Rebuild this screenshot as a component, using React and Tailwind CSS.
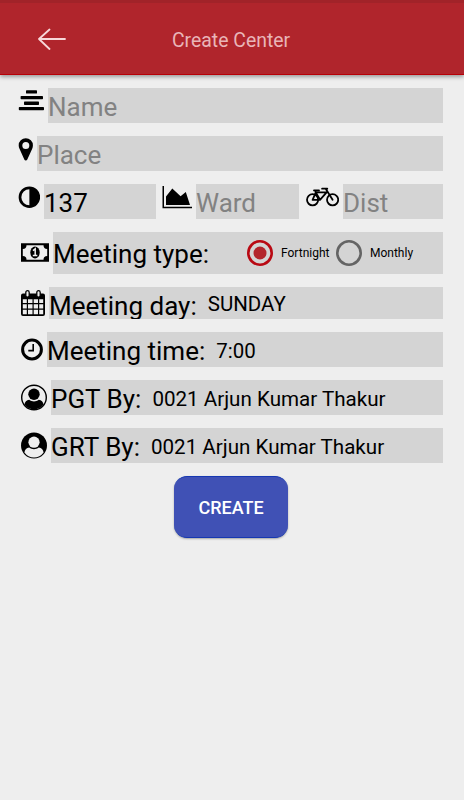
function Icon({ className, viewBox, children }) {
  return (
    <svg className={`block shrink-0 ${className}`} viewBox={viewBox} fill="currentColor">
      {children}
    </svg>
  );
}

const AlignIcon = () => (
  <Icon className="mt-[2px] h-[21px] w-[26px]" viewBox="0 0 26 21">
    <rect x="8" y="0.2" width="11" height="3.4" rx="0.7" />
    <rect x="2.6" y="6" width="22.4" height="3.2" rx="0.7" />
    <rect x="6" y="11.600" width="15" height="3.400" rx="0.7" />
    <rect x="0.8" y="17" width="25.200" height="3.200" rx="0.7" />
  </Icon>
);

const PinIcon = () => (
  <Icon className="mt-[2px] h-[23px] w-[15px]" viewBox="0 0 15 23">
    <path
      fillRule="evenodd"
      d="M7.8 0.2A7.1 7.1 0 0 0 .7 7.4c0 1.300.3 2.300.8 3.300l4.800 10.700c.6 1.400 2.400 1.400 3 0l4.900-10.700c.4-1 .7-2 .7-3.300A7.100 7.100 0 0 0 7.800.2Zm0 3.700a3.500 3.500 0 1 1 0 7 3.500 3.500 0 0 1 0-7Z"
    />
  </Icon>
);

const AdjustIcon = () => (
  <Icon className="mt-[2px] h-[22px] w-[22px]" viewBox="0 0 22 22">
    <circle cx="11.400" cy="11.200" r="9.400" fill="none" stroke="currentColor" strokeWidth="2.700" />
    <path d="M11.400 2.200a9 9 0 0 1 0 18Z" />
  </Icon>
);

const AreaIcon = () => (
  <Icon className="mt-[2px] h-[23px] w-[30px]" viewBox="0 0 30 23">
    <path d="M0.5 0h1.500v20.700H30v1.500H.5Z" />
    <path d="M4 19V10.500L10.300 2.400 18.600 10.200l5.200-4.300L28 19Z" />
  </Icon>
);

const BikeIcon = () => (
  <Icon className="mt-[3px] h-[20px] w-[33px]" viewBox="0 0 33 20">
    <g fill="none" stroke="currentColor" strokeWidth="1.800" strokeLinejoin="round" strokeLinecap="round">
      <circle cx="6.6" cy="12.8" r="5.6" />
      <circle cx="26.6" cy="12.8" r="5.6" />
      <path d="M6.600 12.800H14L9.800 5.400ZM14 12.800l6.600-7.500H9.800M26.600 12.800 19.700 1.700h-3.600M19.200 1.700h2.100M8 3.400h5M9.800 5.400l-.7-1.900" />
    </g>
  </Icon>
);

const MoneyIcon = () => (
  <Icon className="mt-[11px] h-[20px] w-[28px]" viewBox="0 0 28 20">
    <path
      fillRule="evenodd"
      d="M0 .3h28v18.400H0ZM5.500 2.200a3.700 3.700 0 0 1-3.700 3.700v7.200a3.700 3.700 0 0 1 3.700 3.700h17a3.700 3.700 0 0 1 3.700-3.700V5.900a3.700 3.700 0 0 1-3.700-3.700Z"
    />
    <ellipse cx="14" cy="9.500" rx="4.700" ry="6" />
    <path d="m12 7.600 2.200-1.800v6.700m-2.400 0h4.500" fill="none" stroke="#efefef" strokeWidth="1.500" />
  </Icon>
);

const CalendarIcon = () => (
  <Icon className="mt-[3px] h-[27px] w-[24px]" viewBox="0 0 24 27">
    <path
      fillRule="evenodd"
      d="M2 3.500h20a2 2 0 0 1 2 2V24a2 2 0 0 1-2 2H2a2 2 0 0 1-2-2V5.500a2 2 0 0 1 2-2ZM1.800 9.200v3.800h4V9.200ZM7 9.200v3.800h4.500V9.200Zm5.700 0v3.800h4.300V9.200Zm5.500 0v3.800h4V9.200ZM1.800 14.200v4.400h4v-4.400Zm5.200 0v4.400h4.500v-4.400Zm5.700 0v4.400h4.300v-4.400Zm5.500 0v4.400h4v-4.400ZM1.800 19.800v4.400h4v-4.400Zm5.200 0v4.400h4.500v-4.400Zm5.700 0v4.400h4.300v-4.400Zm5.500 0v4.400h4v-4.400Z"
    />
    <rect x="4.800" y=".7" width="3.400" height="6.400" rx="1.700" stroke="currentColor" fill="#efefef" strokeWidth="1.300" />
    <rect x="15.800" y=".7" width="3.400" height="6.400" rx="1.700" stroke="currentColor" fill="#efefef" strokeWidth="1.300" />
  </Icon>
);

const ClockIcon = () => (
  <Icon className="mt-[6px] h-[23px] w-[22px]" viewBox="0 0 22 23">
    <g fill="none" stroke="currentColor">
      <circle cx="11" cy="11.500" r="9.400" strokeWidth="3" />
      <path d="M12.200 6v6.600H7.300" strokeWidth="1.600" />
    </g>
  </Icon>
);

const UserOutlineIcon = () => (
  <Icon className="mt-[4px] h-[27px] w-[26px]" viewBox="0 0 26 27">
    <circle cx="13" cy="13.500" r="12.300" fill="none" stroke="currentColor" strokeWidth="1.400" />
    <circle cx="13" cy="10.200" r="5.700" />
    <path d="M8.200 15.700c2.800 2.300 6.800 2.300 9.600 0 2.700.1 4.300 2.100 4.800 4.800a12 12 0 0 1-19.200 0c.5-2.700 2.100-4.700 4.800-4.800Z" />
  </Icon>
);

const UserSolidIcon = () => (
  <Icon className="mt-[4px] h-[27px] w-[26px]" viewBox="0 0 26 27">
    <circle cx="13" cy="13.500" r="13" />
    <path
      fill="#efefef"
      d="M8.200 15.400c-2.700.2-4.300 2.100-4.800 5.100a11.800 11.800 0 0 0 19.200 0c-.5-3-2.100-4.900-4.800-5.100-2.800 2.300-6.800 2.300-9.600 0Z"
    />
    <circle cx="13" cy="10.200" r="5.600" fill="#efefef" />
  </Icon>
);

function Input({ label, className, filled }) {
  return (
    <div className={`h-[35px] bg-[#d4d4d4] text-[26px] leading-[38px] ${filled ? "text-black" : "text-[#828282]"} ${className}`}>
      {label}
    </div>
  );
}

function Detail({ icon, label, value, rowClass, gapClass, valueClass }) {
  return (
    <div className={`flex items-start pl-[21px] ${rowClass}`}>
      {icon}
      <div className={`ml-1 flex h-full flex-1 items-center overflow-hidden bg-[#d4d4d4] text-black ${gapClass}`}>
        <span className="text-[26px] leading-[30px]">{label}</span>
        <span className={valueClass}>{value}</span>
      </div>
    </div>
  );
}

function Radio({ label, checked, className }) {
  return (
    <div className="flex items-center">
      <svg className="size-[26px]" viewBox="0 0 26 26">
        <circle cx="13" cy="13" r="11.700" fill="none" stroke={checked ? "#b90913" : "#646464"} strokeWidth="2.600" />
        {checked && <circle cx="13" cy="13" r="6.500" fill="#b3252c" />}
      </svg>
      <span className={`ml-2 text-[12px] leading-4 ${className}`}>{label}</span>
    </div>
  );
}

export default function App() {
  return (
    <div className="h-[800px] w-[464px] overflow-hidden bg-[#eeeeee] font-[Roboto,sans-serif] whitespace-nowrap">
      <header className="flex h-[75px] items-start border-t-[3px] border-b border-t-[#a12329] border-b-[#b80007] bg-[#b0252c] shadow-[0_2px_4px_rgba(0,0,0,0.35)]">
        <svg className="mt-[25px] ml-[38px] h-[23px] w-[28px]" viewBox="0 0 28 23" fill="none" stroke="#f8d8da" strokeWidth="1.800" strokeLinecap="round" strokeLinejoin="round">
          <path d="M27 11H1M11.500 1.500 1 11l10.500 10" />
        </svg>
        <h1 className="mt-[24px] ml-[106px] text-[19.400px] leading-[28px] text-[#e9b5b8]">Create Center</h1>
      </header>
      <main className="pt-[13px] pr-[21px]">
        <div className="flex pl-[18px]">
          <AlignIcon />
          <Input label="Name" className="ml-1 flex-1" />
        </div>
        <div className="mt-[13px] flex pl-[18px]">
          <PinIcon />
          <Input label="Place" className="ml-1 flex-1" />
        </div>
        <div className="mt-[13px] flex pl-[18px]">
          <AdjustIcon />
          <Input label="137" filled className="ml-1 w-[112px]" />
          <div className="ml-[6px] flex">
            <AreaIcon />
            <Input label="Ward" className="ml-1 w-[103px]" />
          </div>
          <div className="ml-[7px] flex flex-1">
            <BikeIcon />
            <Input label="Dist" className="ml-1 flex-1" />
          </div>
        </div>
        <div className="mt-[13px] flex h-[42px] pl-[21px]">
          <MoneyIcon />
          <div className="ml-1 flex flex-1 items-center bg-[#d4d4d4] text-black">
            <span className="w-[194px] pt-[2px] text-[26px] leading-[30px]">Meeting type:</span>
            <div className="flex">
              <Radio label="Fortnight" checked className="w-[55px]" />
              <Radio label="Monthly" className="" />
            </div>
          </div>
        </div>
        <Detail icon={<CalendarIcon />} label="Meeting day:" value="SUNDAY" rowClass="mt-[13px] h-[32px]" gapClass="gap-[11px] pt-[5px]" valueClass="text-[20.500px] leading-6 pb-[3px]" />
        <Detail icon={<ClockIcon />} label="Meeting time:" value="7:00" rowClass="mt-[13px] h-[35px]" gapClass="gap-[11px] pt-[3px]" valueClass="text-[20.500px] leading-6 pb-px" />
        <Detail icon={<UserOutlineIcon />} label="PGT By:" value="0021 Arjun Kumar Thakur" rowClass="mt-[13px] h-[35px]" gapClass="gap-[11px] pt-[3px]" valueClass="text-[20.600px] leading-6 pb-px" />
        <Detail icon={<UserSolidIcon />} label="GRT By:" value="0021 Arjun Kumar Thakur" rowClass="mt-[13px] h-[35px]" gapClass="gap-[11px] pt-[3px]" valueClass="text-[20.600px] leading-6 pb-px" />
        <button className="mt-[13px] ml-[174px] flex h-[62px] w-[114px] items-center justify-center rounded-[13px] border-y border-[#1638b2] bg-[#4051b5] text-[18px] font-medium text-white shadow-[0_1px_2px_rgba(0,0,0,0.3)]">
          CREATE
        </button>
      </main>
    </div>
  );
}
